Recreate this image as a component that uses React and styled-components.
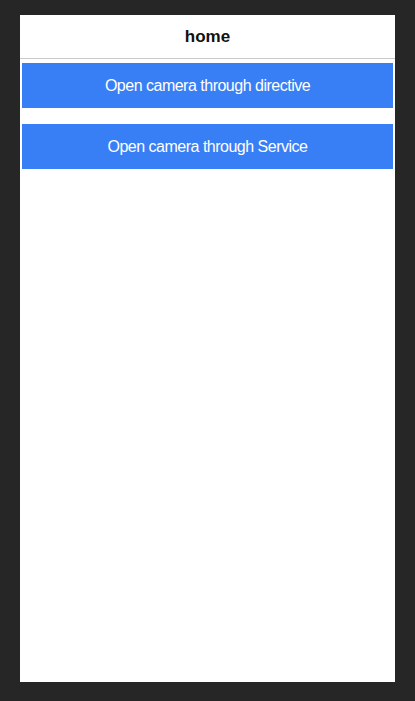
import React from 'react';
import styled, { createGlobalStyle } from 'styled-components';

const GlobalStyle = createGlobalStyle`
  html, body {
    margin: 0;
    padding: 0;
    background: #262626;
  }
  body {
    font-family: "Liberation Sans", Arial, sans-serif;
  }
`;

const Stage = styled.div`
  padding: 15px 20px 19px;
  min-height: 701px;
  box-sizing: border-box;
`;

const Phone = styled.div`
  width: 375px;
  height: 667px;
  background: #fff;
  display: flex;
  flex-direction: column;
`;

const Header = styled.header`
  height: 43px;
  border-bottom: 1px solid #c9c9c9;
  display: flex;
  align-items: center;
  justify-content: center;
  font-size: 17px;
  font-weight: bold;
  color: #111;
`;

const Content = styled.div`
  display: flex;
  flex-direction: column;
  gap: 16px;
  padding: 4px 2px 0;
`;

const Button = styled.button`
  height: 45px;
  border: none;
  background: #387ef5;
  color: #fff;
  font-family: "Liberation Sans", Arial, sans-serif;
  font-size: 16px;
  letter-spacing: -0.5px;
  padding: 0;
  cursor: pointer;
`;

export default function App() {
  return (
    <>
      <GlobalStyle />
      <Stage>
        <Phone>
          <Header>home</Header>
          <Content>
            <Button>Open camera through directive</Button>
            <Button>Open camera through Service</Button>
          </Content>
        </Phone>
      </Stage>
    </>
  );
}
